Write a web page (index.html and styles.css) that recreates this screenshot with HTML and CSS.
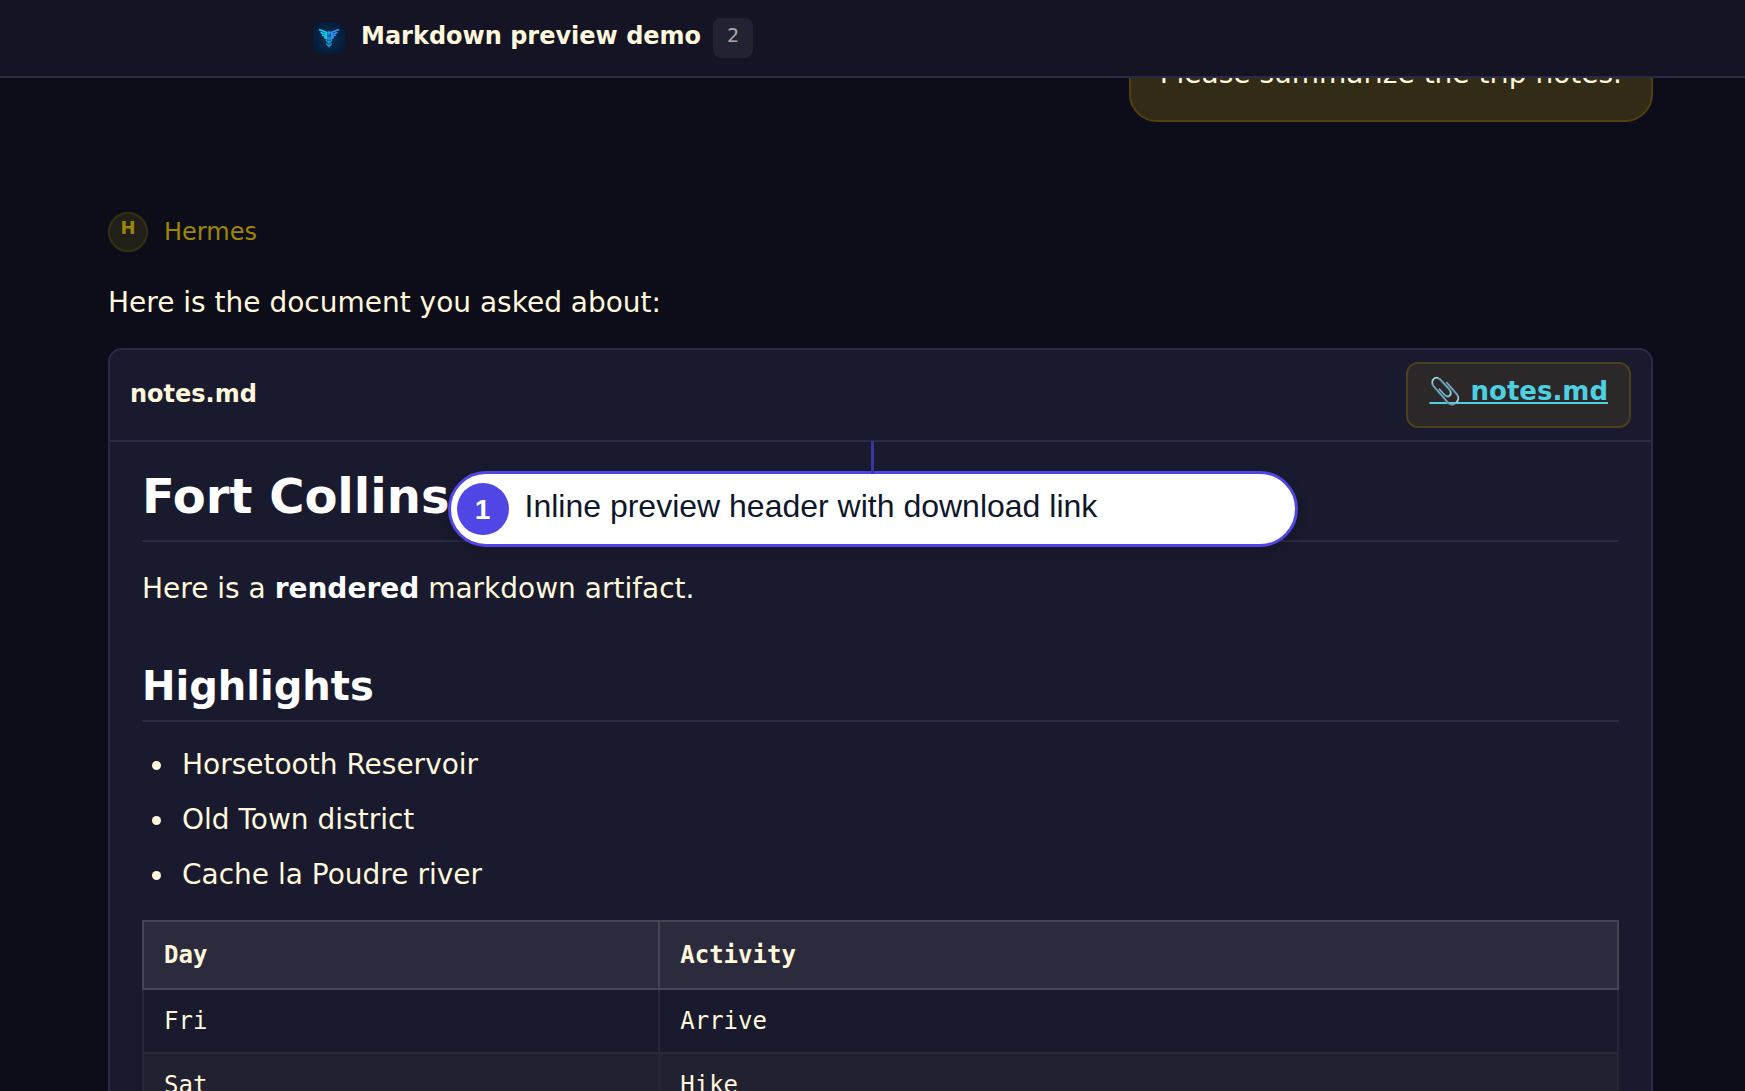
FILE: index.html
```html
<!DOCTYPE html>
<html lang="en">
<head>
    <meta charset="UTF-8">
    <meta name="viewport" content="width=device-width, initial-scale=1.0">
    <title>Markdown preview demo</title>
    <link rel="stylesheet" href="styles.css">
</head>
<body>
    <header class="topbar">
        <svg class="logo" viewBox="0 0 32 32" aria-hidden="true">
            <defs>
                <radialGradient id="logobg" r="0.7">
                    <stop offset="0" stop-color="#0a2f57"/>
                    <stop offset="1" stop-color="#05152d"/>
                </radialGradient>
            </defs>
            <rect width="32" height="32" rx="8" fill="url(#logobg)"/>
            <g fill="none" stroke-width="1.800">
                <path stroke="#12cdf2" d="M6 7.500 L14 10.500 M7.500 10.500 L14 12.500 M9 13 L13.500 14.500 M11 15.500 L14 16.500 M13.500 10 V17"/>
                <path stroke="#3290f5" d="M26 7.500 L18 10.500 M24.500 10.500 L18 12.500 M23 13 L18.500 14.500 M21 15.500 L18 16.500 M18.500 10 V17"/>
            </g>
            <circle cx="16" cy="10.500" r="1.600" fill="#1ea7ec"/>
            <path fill="none" stroke="#209bdc" stroke-width="1.200" d="M16 12 V25.500 M14 16 C20 17 20 19 16 20 C13 21 13 23 16 24 M18 16 C12 17 12 19 16 20 C19 21 19 23 16 24"/>
        </svg>
        <h1 class="title">Markdown preview demo</h1>
        <span class="count">2</span>
    </header>
    <main class="chat">
        <div class="bubble">Please summarize the trip notes.</div>
        <div class="role">
            <span class="avatar">H</span>
            <span class="role-name">Hermes</span>
        </div>
        <p class="message">Here is the document you asked about:</p>
        <section class="preview">
            <div class="preview-header">
                <span class="filename">notes.md</span>
                <a class="download" href="notes.md">📎 notes.md</a>
            </div>
            <article class="markdown">
                <h1>Fort Collins</h1>
                <p>Here is a <strong>rendered</strong> markdown artifact.</p>
                <h2>Highlights</h2>
                <ul>
                    <li>Horsetooth Reservoir</li>
                    <li>Old Town district</li>
                    <li>Cache la Poudre river</li>
                </ul>
                <table>
                    <thead>
                        <tr><th class="day">Day</th><th>Activity</th></tr>
                    </thead>
                    <tbody>
                        <tr><td>Fri</td><td>Arrive</td></tr>
                        <tr><td>Sat</td><td>Hike</td></tr>
                    </tbody>
                </table>
            </article>
        </section>
        <div class="callout">
            <span class="callout-number">1</span>
            <span class="callout-text">Inline preview header with download link</span>
        </div>
    </main>
</body>
</html>
```
FILE: styles.css
```css
*{
    box-sizing: border-box;
}
body{
    margin: 0;
    height: 100vh;
    overflow: hidden;
    display: flex;
    flex-direction: column;
    background-color: #0d0d1a;
    color: #fff8dc;
    font-family: "DejaVu Sans", sans-serif;
    font-size: 28px;
    line-height: 49px;
}
.topbar{
    display: flex;
    flex-shrink: 0;
    align-items: center;
    height: 78px;
    padding: 0 313px;
    background-color: #141425;
    border-bottom: 2px solid #2a2a45;
}
.logo{
    width: 32px;
    height: 32px;
}
.title{
    margin: 0 12px 0 16px;
    padding-bottom: 4px;
    font-size: 24px;
    line-height: 36px;
    white-space: nowrap;
}
.count{
    width: 40px;
    height: 40px;
    background-color: #222232;
    border-radius: 8px;
    color: #a9a9a9;
    font-family: "DejaVu Sans Mono", monospace;
    font-size: 20px;
    line-height: 34px;
    text-align: center;
}
.chat{
    position: relative;
    flex: 1;
    overflow: hidden;
    padding: 0 92px 0 108px;
}
.bubble{
    width: fit-content;
    margin: -49px 0 90px auto;
    padding: 18px 29px 22px;
    background-color: #322b18;
    border: 2px solid #4f4110;
    border-radius: 28px;
}
.role{
    display: flex;
    align-items: center;
    gap: 16px;
    color: #9d8506;
}
.avatar{
    width: 40px;
    height: 40px;
    background-color: #221f18;
    border: 2px solid #353015;
    border-radius: 50%;
    font-size: 18px;
    font-weight: bold;
    line-height: 28px;
    text-align: center;
}
.role-name{
    font-size: 24px;
    line-height: 40px;
}
.message{
    margin: 26px 0 21px;
}
.preview{
    background-color: #1a1a2e;
    border: 2px solid #2a2a45;
    border-radius: 14px;
}
.preview-header{
    display: flex;
    align-items: center;
    justify-content: space-between;
    padding: 12px 20px;
    border-bottom: 2px solid #2a2a45;
}
.filename{
    padding-bottom: 2px;
    font-size: 24px;
    font-weight: bold;
}
.download{
    height: 66px;
    padding: 3px 21px;
    background-color: #2c2829;
    border: 2px solid #4a3f20;
    border-radius: 12px;
    color: #4dd0e1;
    font-size: 26px;
    font-weight: bold;
}
.markdown{
    padding: 20px 32px;
}
.markdown h1,
.markdown h2{
    margin: 0;
    color: #ffffff;
    border-bottom: 2px solid #2a2a45;
}
.markdown h1{
    padding-bottom: 10px;
    font-size: 48px;
    line-height: 68px;
}
.markdown h2{
    margin-top: 45px;
    padding-bottom: 6px;
    font-size: 40px;
    line-height: 56px;
}
.markdown p{
    margin: 22px 0;
}
.markdown strong{
    color: #ffffff;
}
.markdown ul{
    margin: 18px 0 21px;
    padding-left: 34px;
}
.markdown li{
    margin-bottom: 6px;
    padding-left: 6px;
}
.markdown table{
    width: 100%;
    border-collapse: collapse;
    font-family: "DejaVu Sans Mono", monospace;
    font-size: 24px;
    line-height: 42px;
}
.markdown th,
.markdown td{
    padding: 10px 20px;
    text-align: left;
}
.markdown th{
    padding: 12px 20px;
    background-color: #2c2b3d;
    border: 2px solid #464556;
}
.markdown td{
    border: 2px solid #272738;
}
.markdown .day{
    width: 35%;
}
.markdown tbody tr:nth-child(even){
    background-color: #212132;
}
.callout{
    position: absolute;
    top: 393px;
    left: 50%;
    display: flex;
    align-items: center;
    gap: 16px;
    width: 850px;
    height: 76px;
    margin-left: -425px;
    padding: 0 6px;
    background-color: #ffffff;
    border: 3px solid #4f46e5;
    border-radius: 38px;
    box-shadow: 0 4px 12px rgba(0, 0, 0, 0.2);
    color: #0f172a;
    font-family: "Liberation Sans", Arial, sans-serif;
    font-size: 32px;
}
/* connector up to the preview header */
.callout::before{
    content: "";
    position: absolute;
    bottom: 100%;
    left: 50%;
    width: 3px;
    height: 33px;
    margin-left: -2px;
    background-color: #3a34a0;
}
.callout-number{
    width: 52px;
    height: 52px;
    background-color: #4f46e5;
    border-radius: 50%;
    color: #ffffff;
    font-size: 28px;
    font-weight: bold;
    line-height: 54px;
    text-align: center;
}
.callout-text{
    padding-bottom: 6px;
}
```
